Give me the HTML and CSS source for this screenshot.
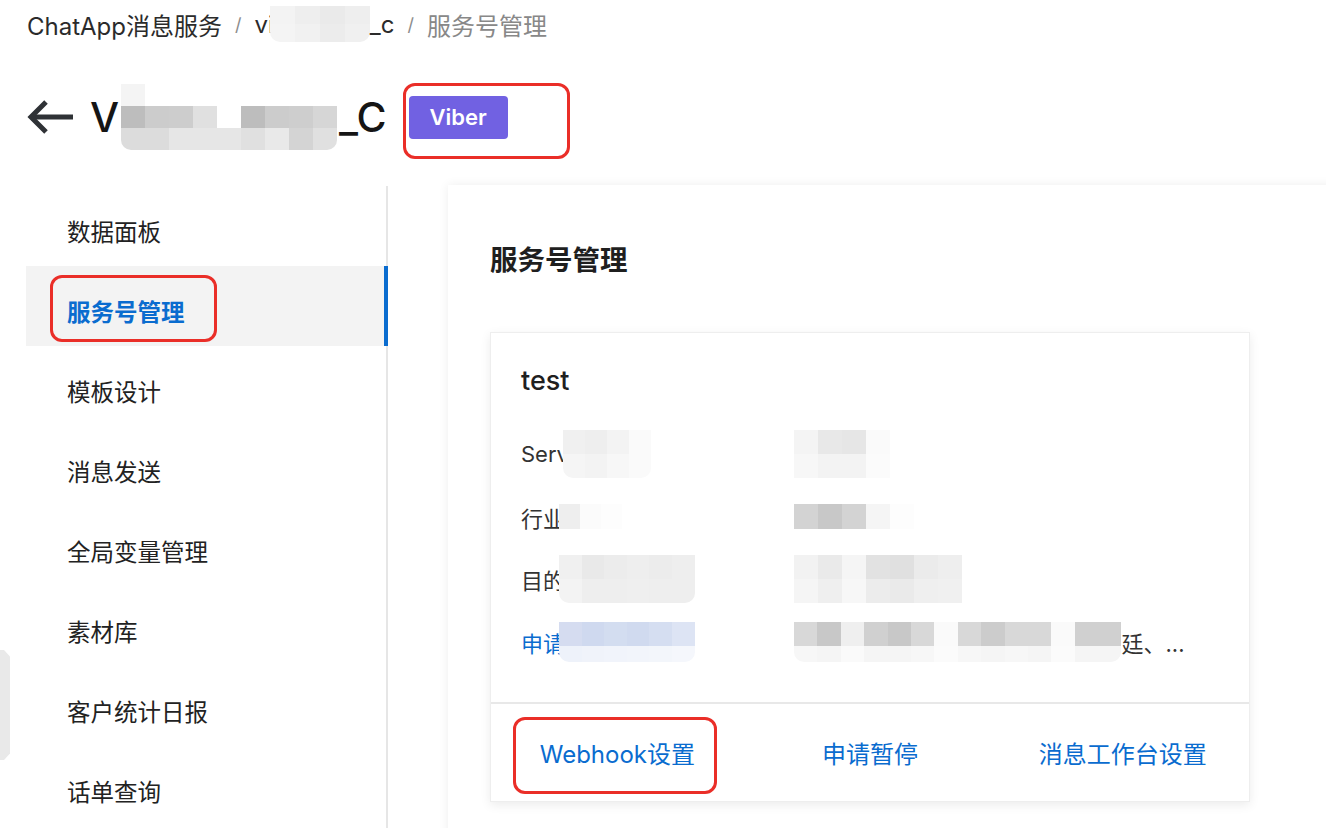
FILE: index.html
```html
<!DOCTYPE html>
<html lang="zh-CN">
<head>
  <meta charset="UTF-8" />
  <meta name="viewport" content="width=device-width, initial-scale=1" />
  <title>服务号管理 - ChatApp消息服务</title>
  <link rel="stylesheet" href="styles.css">
</head>
<body>
  <div class="page">
    <div class="breadcrumb">
      <span>ChatApp消息服务</span>
      <span class="sep">/</span>
      <span class="crumb">vi<span class="mosaic round" data-w="25" data-h="18" data-cells="f3 ee ea ee|f4 f1 ec f0"></span>_c</span>
      <span class="sep">/</span>
      <span class="current">服务号管理</span>
    </div>

    <div class="title-row">
      <svg class="back" width="48" height="36" viewBox="0 0 48 36" fill="none" stroke="#2f3236" stroke-width="5">
        <path d="M47 18H5" />
        <path d="M20 3L5 18L20 33" stroke-linejoin="miter" />
      </svg>
      <h1 class="title">V<span class="mosaic round" data-w="24" data-h="22" data-cells="f4 ff ff ff ff ff ff ff ff|bd cc cd e0 ff bd cc ce d6|dc dc e6 e6 e6 e0 e9 d4 e0"></span>_C</h1>
      <span class="badge">Viber<span class="mark mark-badge"></span></span>
    </div>

    <div class="layout">
      <nav class="sidebar">
        <a class="nav-item">数据面板</a>
        <a class="nav-item active">服务号管理<span class="mark mark-nav"></span></a>
        <a class="nav-item">模板设计</a>
        <a class="nav-item">消息发送</a>
        <a class="nav-item">全局变量管理</a>
        <a class="nav-item">素材库</a>
        <a class="nav-item">客户统计日报</a>
        <a class="nav-item">话单查询</a>
      </nav>

      <main class="content">
        <h2 class="content-title">服务号管理</h2>

        <div class="account-card">
          <div class="card-body">
            <div class="card-name">test</div>

            <div class="info-row">
              <div class="info-label">Serv<span class="mosaic round cover" data-w="22" data-h="24" data-cells="f0 ee f3 fa|f5 f3 f7 fa"></span></div>
              <div class="info-value"><span class="mosaic" data-w="24" data-h="24" data-cells="f4 e8 e6 fa|f7 f3 f3 fb"></span></div>
            </div>
            <div class="info-row">
              <div class="info-label">行业<span class="mosaic cover" data-w="21" data-h="25" data-cells="ee fb fd"></span></div>
              <div class="info-value"><span class="mosaic" data-w="24" data-h="25" data-cells="d3 c8 d3 f5 fd ff"></span></div>
            </div>
            <div class="info-row">
              <div class="info-label">目的<span class="mosaic round cover" data-w="22.6" data-h="24" data-cells="f0 e9 ec ee ec ee|f3 ee ee ef ee ee"></span></div>
              <div class="info-value"><span class="mosaic" data-w="24" data-h="24" data-cells="f2 ea f5 e2 e0 eb ee|f5 ef f7 ec ea ef f0"></span></div>
            </div>
            <div class="info-row">
              <div class="info-label link">申请<span class="mosaic round cover" data-w="22.6" data-h="24,16" data-cells="d5dcf0 cfd9ef d3ddf0 d0daef d5def1 dde4f4|eef2fa f0f3fa f1f4fb f2f5fb f3f6fb f5f7fc"></span></div>
              <div class="info-value"><span class="mosaic round" data-w="23.4" data-h="24,16" data-cells="d8 c8 ef d0 c8 d8 fa d8 cc d8 d8 fa d0 d0|f7 f5 fa f5 f5 f7 fb f7 f5 f7 f5 fb f5 f5"></span>廷、...</div>
            </div>
          </div>

          <div class="card-actions">
            <a class="action">Webhook设置<span class="mark mark-action"></span></a>
            <a class="action">申请暂停</a>
            <a class="action">消息工作台设置</a>
          </div>
        </div>
      </main>
    </div>

    <div class="edge-tab"></div>
  </div>

  <script>
    // build the blurred blocks from their data strings
    document.querySelectorAll('.mosaic').forEach(el => {
      const w = el.dataset.w;
      const heights = el.dataset.h.split(',');
      const rows = el.dataset.cells.split('|');
      rows.forEach((row, i) => {
        const line = document.createElement('span');
        line.className = 'mosaic-row';
        line.style.height = (heights[i] || heights[0]) + 'px';
        row.trim().split(' ').forEach(shade => {
          const cell = document.createElement('span');
          cell.className = 'mosaic-cell';
          cell.style.width = w + 'px';
          const hex = shade.length === 2 ? shade + shade + shade : shade;
          cell.style.background = '#' + hex;
          line.appendChild(cell);
        });
        el.appendChild(line);
      });
    });
  </script>
</body>
</html>
```

FILE: styles.css
```css
:root {
  --text: #1f1f1f;
  --text-muted: #888888;
  --blue: #0a6ccf;
  --line: #e6e6e6;
  --mark: #ea2e28;
  --viber: #7161e2;
}

html, body {
  margin: 0;
  background: #ffffff;
}

body {
  font-family: Inter, "Noto Sans CJK SC", sans-serif;
  color: var(--text);
}

.page {
  position: relative;
  width: 1326px;
  height: 828px;
  overflow: hidden;
}

/* breadcrumb */
.breadcrumb {
  display: flex;
  align-items: center;
  gap: 13px;
  padding: 6px 0 0 27px;
  height: 36px;
  font-size: 24px;
  color: #2b2b2b;
}

.breadcrumb .sep {
  color: #8c8c8c;
  font-size: 18px;
}

.breadcrumb .crumb {
  display: flex;
  align-items: center;
}

.breadcrumb .crumb .mosaic {
  margin-left: -4px;
}

.breadcrumb .current {
  color: var(--text-muted);
}

/* title row */
.title-row {
  display: flex;
  align-items: center;
  height: 70px;
  margin-top: 40px;
  padding-left: 26px;
}

.back {
  display: block;
  margin-right: 16px;
}

.title {
  display: flex;
  align-items: center;
  margin: 0;
  font-size: 41px;
  font-weight: 500;
  color: #151515;
  line-height: 70px;
}

.title .mosaic {
  margin: 0 2px;
}

.badge {
  position: relative;
  margin-left: 22px;
  padding: 0 21px;
  height: 43px;
  line-height: 43px;
  border-radius: 4px;
  background: var(--viber);
  color: #ffffff;
  font-size: 22px;
  font-weight: 600;
}

/* red annotation boxes */
.mark {
  position: absolute;
  box-sizing: border-box;
  border: 3px solid var(--mark);
  border-radius: 12px;
  pointer-events: none;
}

.mark-badge {
  left: -6px;
  top: -13px;
  width: 167px;
  height: 76px;
}

.mark-nav {
  left: 24px;
  top: 9px;
  width: 167px;
  height: 67px;
}

.mark-action {
  left: 22px;
  top: 13px;
  width: 204px;
  height: 77px;
}

/* mosaic blocks */
.mosaic {
  display: inline-flex;
  flex-direction: column;
  vertical-align: middle;
  overflow: hidden;
}

.mosaic.round {
  border-radius: 0 0 10px 10px;
}

.mosaic.cover {
  margin-left: -6px;
}

.mosaic-row {
  display: flex;
}

.mosaic-cell {
  display: block;
  height: 100%;
}

/* layout */
.layout {
  display: flex;
  margin-top: 33px;
}

.sidebar {
  flex-shrink: 0;
  display: flex;
  flex-direction: column;
  width: 360px;
  margin-left: 26px;
  margin-top: 1px;
  height: 700px;
  border-right: 2px solid var(--line);
}

.nav-item {
  position: relative;
  display: flex;
  align-items: center;
  box-sizing: border-box;
  height: 80px;
  padding: 10px 0 0 41px;
  font-size: 23.5px;
  color: #222222;
  cursor: pointer;
}

.nav-item.active {
  margin-right: -2px;
  background: #f3f3f3;
  border-right: 4px solid var(--blue);
  color: var(--blue);
  font-weight: 600;
}

.content {
  flex-shrink: 0;
  width: 900px;
  height: 700px;
  margin-left: 60px;
  padding: 55px 0 0 42px;
  background: #ffffff;
  box-shadow: 0 0 10px rgba(0, 0, 0, 0.07);
}

.content-title {
  margin: 0;
  font-size: 27.5px;
  font-weight: 700;
  line-height: 40px;
  color: #1f1f1f;
}

/* account card */
.account-card {
  width: 760px;
  margin-top: 52px;
  background: #ffffff;
  border: 1px solid #eeeeee;
  box-sizing: border-box;
  box-shadow: 0 3px 10px rgba(0, 0, 0, 0.08);
}

.card-body {
  padding: 30px 30px 29px;
  border-bottom: 2px solid #e8e8e8;
}

.card-name {
  font-size: 27px;
  font-weight: 500;
  line-height: 36px;
  margin-bottom: 24px;
}

.info-row {
  display: flex;
  align-items: center;
  height: 62.5px;
  font-size: 22px;
  color: #333333;
}

.info-label {
  display: flex;
  align-items: center;
  width: 273px;
}

.info-label.link {
  color: var(--blue);
}

.info-value {
  display: flex;
  align-items: center;
}

.card-actions {
  display: flex;
  height: 97px;
}

.action {
  position: relative;
  flex: 1;
  display: flex;
  align-items: center;
  justify-content: center;
  font-size: 24px;
  color: var(--blue);
  cursor: pointer;
}

/* floating tab at left edge */
.edge-tab {
  position: absolute;
  left: 0;
  top: 650px;
  width: 10px;
  height: 110px;
  background: #e9e9e9;
  clip-path: polygon(0 0, 40% 0, 100% 6%, 100% 94%, 40% 100%, 0 100%);
}
```
